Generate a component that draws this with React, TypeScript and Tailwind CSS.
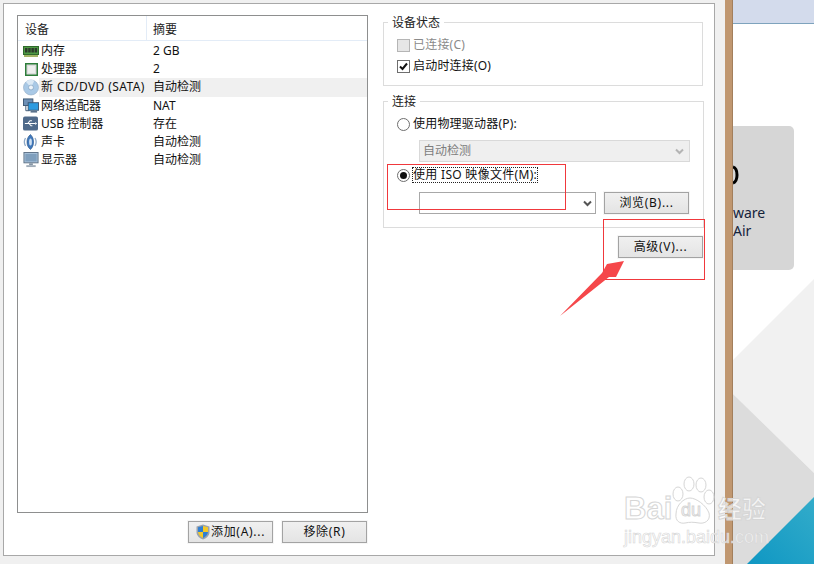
const font = { fontFamily: '"Noto Sans", "Noto Sans CJK SC", sans-serif' }

const MemoryIcon = () => (
  <svg width="16" height="11" viewBox="0 0 16 11">
    <rect x="0.5" y="0.5" width="15" height="8" fill="#4f9a45" stroke="#2f6a2c" />
    <rect x="2" y="2" width="2.5" height="4.5" fill="#2c3a2c" />
    <rect x="5.2" y="2" width="2.5" height="4.5" fill="#2c3a2c" />
    <rect x="8.4" y="2" width="2.5" height="4.5" fill="#2c3a2c" />
    <rect x="11.6" y="2" width="2.5" height="4.5" fill="#2c3a2c" />
    <rect x="1" y="9" width="14" height="2" fill="#a3b566" />
  </svg>
)

const CpuIcon = () => (
  <svg width="13" height="13" viewBox="0 0 13 13" className="ml-[2px]">
    <rect x="0.75" y="0.75" width="11.5" height="11.5" fill="#dcdcdc" stroke="#2d7d3a" strokeWidth="1.5" />
    <rect x="3" y="3" width="7" height="7" fill="#eeeeee" />
  </svg>
)

const DiscIcon = () => (
  <svg width="17" height="17" viewBox="0 0 17 17">
    <circle cx="8.5" cy="8.5" r="8" fill="#a9c9e6" stroke="#8ba6c0" strokeWidth="0.6" />
    <path d="M8.5 8.5 L3 2.5 A8 8 0 0 1 12 1.2 Z" fill="#dbe9f5" />
    <circle cx="8.5" cy="8.5" r="2.6" fill="#eef4fa" stroke="#7f9dbb" strokeWidth="0.7" />
  </svg>
)

const NetworkIcon = () => (
  <svg width="17" height="16" viewBox="0 0 17 16">
    <rect x="0.5" y="0.5" width="10" height="7" fill="#6d8fb5" stroke="#3d5773" />
    <path d="M3 8v5h4" fill="none" stroke="#3d5773" />
    <rect x="5.5" y="4.5" width="11" height="8" fill="#2d9be0" stroke="#3d5773" />
    <rect x="8" y="13" width="7" height="2" fill="#5b738c" />
  </svg>
)

const UsbIcon = () => (
  <svg width="15" height="15" viewBox="0 0 16 15">
    <rect width="16" height="15" rx="2" fill="#4f6a8a" />
    <path d="M2 7.5h11M5 7.5l2.5-3h2M6.5 7.5l2 2.5h1.5" fill="none" stroke="#fff" strokeWidth="1.1" />
    <path d="M13 5.8l2 1.7-2 1.7z" fill="#fff" />
  </svg>
)

const SpeakerIcon = () => (
  <svg width="15" height="16" viewBox="0 0 15 16">
    <path d="M7.5 0.5C10 3 10.5 5.5 10.5 8s-.5 5-3 7.5C5 13.5 4 11 4 8s1-5.5 3.5-7.5z" fill="#3f78bd" stroke="#26507f" strokeWidth="0.6" />
    <ellipse cx="7.5" cy="8" rx="1.4" ry="3.5" fill="#cfe0f1" />
    <path d="M2.5 4a8 8 0 0 0 0 8M12 4a8 8 0 0 1 0 8" fill="none" stroke="#8fa9c6" strokeWidth="1.3" />
  </svg>
)

const MonitorIcon = () => (
  <svg width="16" height="16" viewBox="0 0 16 17">
    <rect x="0.5" y="0.5" width="15" height="11" fill="#a9c2da" stroke="#5d7186" />
    <rect x="2" y="2" width="12" height="8" fill="#7f9fbd" />
    <rect x="6" y="12" width="4" height="2" fill="#8494a4" />
    <rect x="3" y="14" width="10" height="2" fill="#a0acb8" />
  </svg>
)

const ShieldIcon = () => (
  <svg width="14" height="16" viewBox="0 0 14 16" className="shrink-0">
    <path d="M7 0.5 L13.5 2.5 V8 C13.5 12 10 14.5 7 15.5 C4 14.5 0.5 12 0.5 8 V2.5 Z" fill="#9aa3ad" />
    <path d="M7 2 V8 H2 V3.3 Z" fill="#2f7fd3" />
    <path d="M7 2 L12 3.3 V8 H7 Z" fill="#f4c928" />
    <path d="M7 8 H2 C2.3 11 4.6 13 7 14 Z" fill="#f4c928" />
    <path d="M7 8 H12 C11.7 11 9.4 13 7 14 Z" fill="#2f7fd3" />
  </svg>
)

const rows = [
  { icon: <MemoryIcon />, name: "内存", summary: "2 GB" },
  { icon: <CpuIcon />, name: "处理器", summary: "2" },
  { icon: <DiscIcon />, name: "新 CD/DVD (SATA)", summary: "自动检测", selected: true },
  { icon: <NetworkIcon />, name: "网络适配器", summary: "NAT" },
  { icon: <UsbIcon />, name: "USB 控制器", summary: "存在" },
  { icon: <SpeakerIcon />, name: "声卡", summary: "自动检测" },
  { icon: <MonitorIcon />, name: "显示器", summary: "自动检测" },
]

function WinButton({ children, className = "" }: { children: React.ReactNode; className?: string }) {
  return (
    <button className={`h-[22px] w-[85px] flex items-center justify-center border border-[#a3a3a3] ring-1 ring-[#f6f6f6] bg-[#e6e6e6] bg-gradient-to-b from-[#f0f0f0] to-[#e4e4e4] text-[12px] tracking-[0.7px] text-[#111] ${className}`}>
      {children}
    </button>
  )
}

function Chevron({ color }: { color: string }) {
  return (
    <svg width="9" height="7" viewBox="0 0 9 7">
      <path d="M1 1.5l3.5 3.5L8 1.5" fill="none" stroke={color} strokeWidth="2" />
    </svg>
  )
}

function Radio({ checked }: { checked?: boolean }) {
  return (
    <span className="w-[13px] h-[13px] rounded-full border border-[#6e6e6e] bg-white flex items-center justify-center shrink-0">
      {checked && <span className="w-[7px] h-[7px] rounded-full bg-[#111]" />}
    </span>
  )
}

function Baidu() {
  return (
    <div className="absolute left-[624px] top-[476px] w-[150px] h-[72px] pointer-events-none text-white/70 [-webkit-text-stroke:1px_#d6d6d6]" style={{ fontFamily: '"Liberation Sans", "Noto Sans CJK SC", sans-serif' }}>
      <span className="absolute left-0 top-[15px] text-[31px] leading-[36px] font-bold">Bai</span>
      <svg className="absolute left-[48px] top-0" width="44" height="50" viewBox="0 0 44 50" fill="#ffffff" fillOpacity="0.6" stroke="#d6d6d6">
        <ellipse cx="6" cy="18" rx="5" ry="7" />
        <ellipse cx="17" cy="8" rx="5" ry="7" />
        <ellipse cx="29" cy="9" rx="5" ry="7" />
        <ellipse cx="37" cy="21" rx="5" ry="7" />
        <path d="M4 38c0-9 8-16 14-16s16 7 19 15c2 8-5 11-10 10-6-1-9-1-14 0-5 1-10-2-9-9z" />
      </svg>
      <span className="absolute left-[57px] top-[24px] text-[18px] leading-[20px]">du</span>
      <span className="absolute left-[94px] top-[18px] text-[24px] leading-[32px] font-bold">经验</span>
      <span className="absolute left-0 top-[50px] text-[18px] leading-[22px] [-webkit-text-stroke:0.6px_#d6d6d6]">jingyan.baidu.com</span>
    </div>
  )
}

export default function App() {
  return (
    <div className="relative w-[814px] h-[564px] overflow-hidden flex text-[12px] text-[#111] bg-[#f0f0f0]" style={font}>
      {/* dialog */}
      <div className="w-[725px] h-full pt-[3px] pl-[3px] pr-[10px] pb-[8px]">
        <div className="h-full bg-white border border-[#a8a8a8] pt-[11px] pl-[13px] flex">
          <div className="w-[351px]">
            <div className="h-[498px] border border-[#8e8f8f] bg-white">
              <div className="flex h-[25px] items-center border-b border-[#e3ecf7] text-[#222]">
                <div className="w-[129px] h-full pl-[7px] pt-[4px] flex items-center border-r border-[#e3ecf7]">设备</div>
                <div className="pl-[6px] pt-[4px]">摘要</div>
              </div>
              <div className="pt-[1px]">
                {rows.map((r) => (
                  <div key={r.name} className="flex h-[18.2px] items-center">
                    <div className="w-[21px] pl-[5px] flex items-center justify-start shrink-0">{r.icon}</div>
                    <div className={`flex flex-1 h-full items-center pl-[2px] ${r.selected ? "bg-[#f0f0f0]" : ""}`}>
                      <div className={`w-[112px] whitespace-nowrap ${r.selected ? "tracking-[0.4px]" : ""}`}>{r.name}</div>
                      <div>{r.summary}</div>
                    </div>
                  </div>
                ))}
              </div>
            </div>
            <div className="flex justify-end gap-[9px] mt-[8px] pr-[1px]">
              <WinButton className="gap-[1px]">
                <ShieldIcon />
                添加(A)...
              </WinButton>
              <WinButton>移除(R)</WinButton>
            </div>
          </div>

          <div className="w-[320px] ml-[15px]">
            <fieldset className="h-[73px] border border-[#dcdcdc] pl-[13px] -mt-[2px]">
              <legend className="ml-[-9px] px-[4px] pt-[2px] leading-[16px] text-[#222]">设备状态</legend>
              <div className="flex items-center h-[20px] mt-[4px] gap-[3px] text-[#8a8a8a] tracking-[0.2px]">
                <span className="w-[13px] h-[13px] border border-[#b5b5b5] bg-[#e6e6e6]" />
                已连接(C)
              </div>
              <div className="flex items-center h-[20px] mt-[1px] gap-[3px] tracking-[0.2px]">
                <span className="w-[13px] h-[13px] border border-[#6e6e6e] bg-white flex items-center justify-center">
                  <svg width="9" height="9" viewBox="0 0 9 9">
                    <path d="M1 4.5l2.5 2.5L8 1.5" fill="none" stroke="#111" strokeWidth="2" />
                  </svg>
                </span>
                启动时连接(O)
              </div>
            </fieldset>

            <fieldset className="h-[136px] mt-[6px] border border-[#dcdcdc] pl-[13px] pr-[13px]">
              <legend className="ml-[-9px] px-[4px] pt-[2px] leading-[16px] text-[#222]">连接</legend>
              <div className="flex items-center h-[20px] gap-[3px] mt-[4px] tracking-[0.2px]">
                <Radio />
                使用物理驱动器(P):
              </div>
              <div className="ml-[22px] mt-[6px] w-[271px] h-[22px] border border-[#d9d9d9] bg-[#efefef] flex items-center justify-between pl-[3px] pr-[5px] text-[#7d7d7d]">
                自动检测
                <Chevron color="#b4b4b4" />
              </div>
              <div className="flex items-center h-[16px] gap-[3px] mt-[5px]">
                <Radio checked />
                <span className="border border-dotted border-[#222] h-[16px] leading-[14px] whitespace-nowrap -ml-[1px] tracking-[0.3px]">使用 ISO 映像文件(M):</span>
              </div>
              <div className="flex items-center mt-[9px] ml-[22px]">
                <div className="w-[177px] h-[22px] border border-[#a8a8a8] bg-white flex items-center justify-end pr-[3px]">
                  <Chevron color="#555" />
                </div>
                <WinButton className="ml-[8px]">浏览(B)...</WinButton>
              </div>
            </fieldset>

            <div className="flex justify-end mt-[8px]">
              <WinButton>高级(V)...</WinButton>
            </div>
          </div>
        </div>
      </div>

      {/* window behind the dialog */}
      <div className="w-[8px] h-full bg-[#c09770] border-r border-[#a37f5c] shrink-0" />
      <div className="relative flex-1 h-full bg-white">
        <svg className="absolute left-0 top-0" width="81" height="564" viewBox="0 0 81 564">
          <defs>
            <linearGradient id="blue" x1="0" y1="1" x2="1" y2="0">
              <stop offset="0" stopColor="#0f97c3" />
              <stop offset="1" stopColor="#33acca" />
            </linearGradient>
          </defs>
          <polygon points="0,360 81,279 81,473 0,394" fill="#f1f1f1" />
          <polygon points="0,394 81,473 81,564 0,564" fill="#dcdcdc" />
          <polygon points="14,564 81,497 81,564" fill="url(#blue)" />
        </svg>
        <div className="relative h-[24px] bg-[#d3dbec] border-b border-[#7ea3bd]" />
        <div className="relative mt-[102px] w-[61px] h-[144px] pt-[39px] bg-[#d6d6d6] rounded-r-[5px] text-[14px] text-[#15233b] leading-[18px]">
          <svg className="block" width="6" height="20" viewBox="0 0 6 20">
            <path d="M0 2c3 1 4 4 4 8s-1 7-4 8" fill="none" stroke="#000" strokeWidth="3" />
          </svg>
          <div className="mt-[19px]">ware</div>
          <div>Air</div>
        </div>
      </div>

      {/* annotations */}
      <div className="absolute left-[387px] top-[164px] w-[179px] h-[46px] border border-[#f0383c]" />
      <div className="absolute left-[603px] top-[219px] w-[102px] h-[61px] border border-[#f0383c]" />
      <svg className="absolute left-[555px] top-[255px]" width="75" height="66" viewBox="555 255 75 66">
        <polygon points="560,316 602,273 607,264 624,261 616,277 609,277" fill="#f5474a" />
      </svg>
      <Baidu />
    </div>
  )
}
